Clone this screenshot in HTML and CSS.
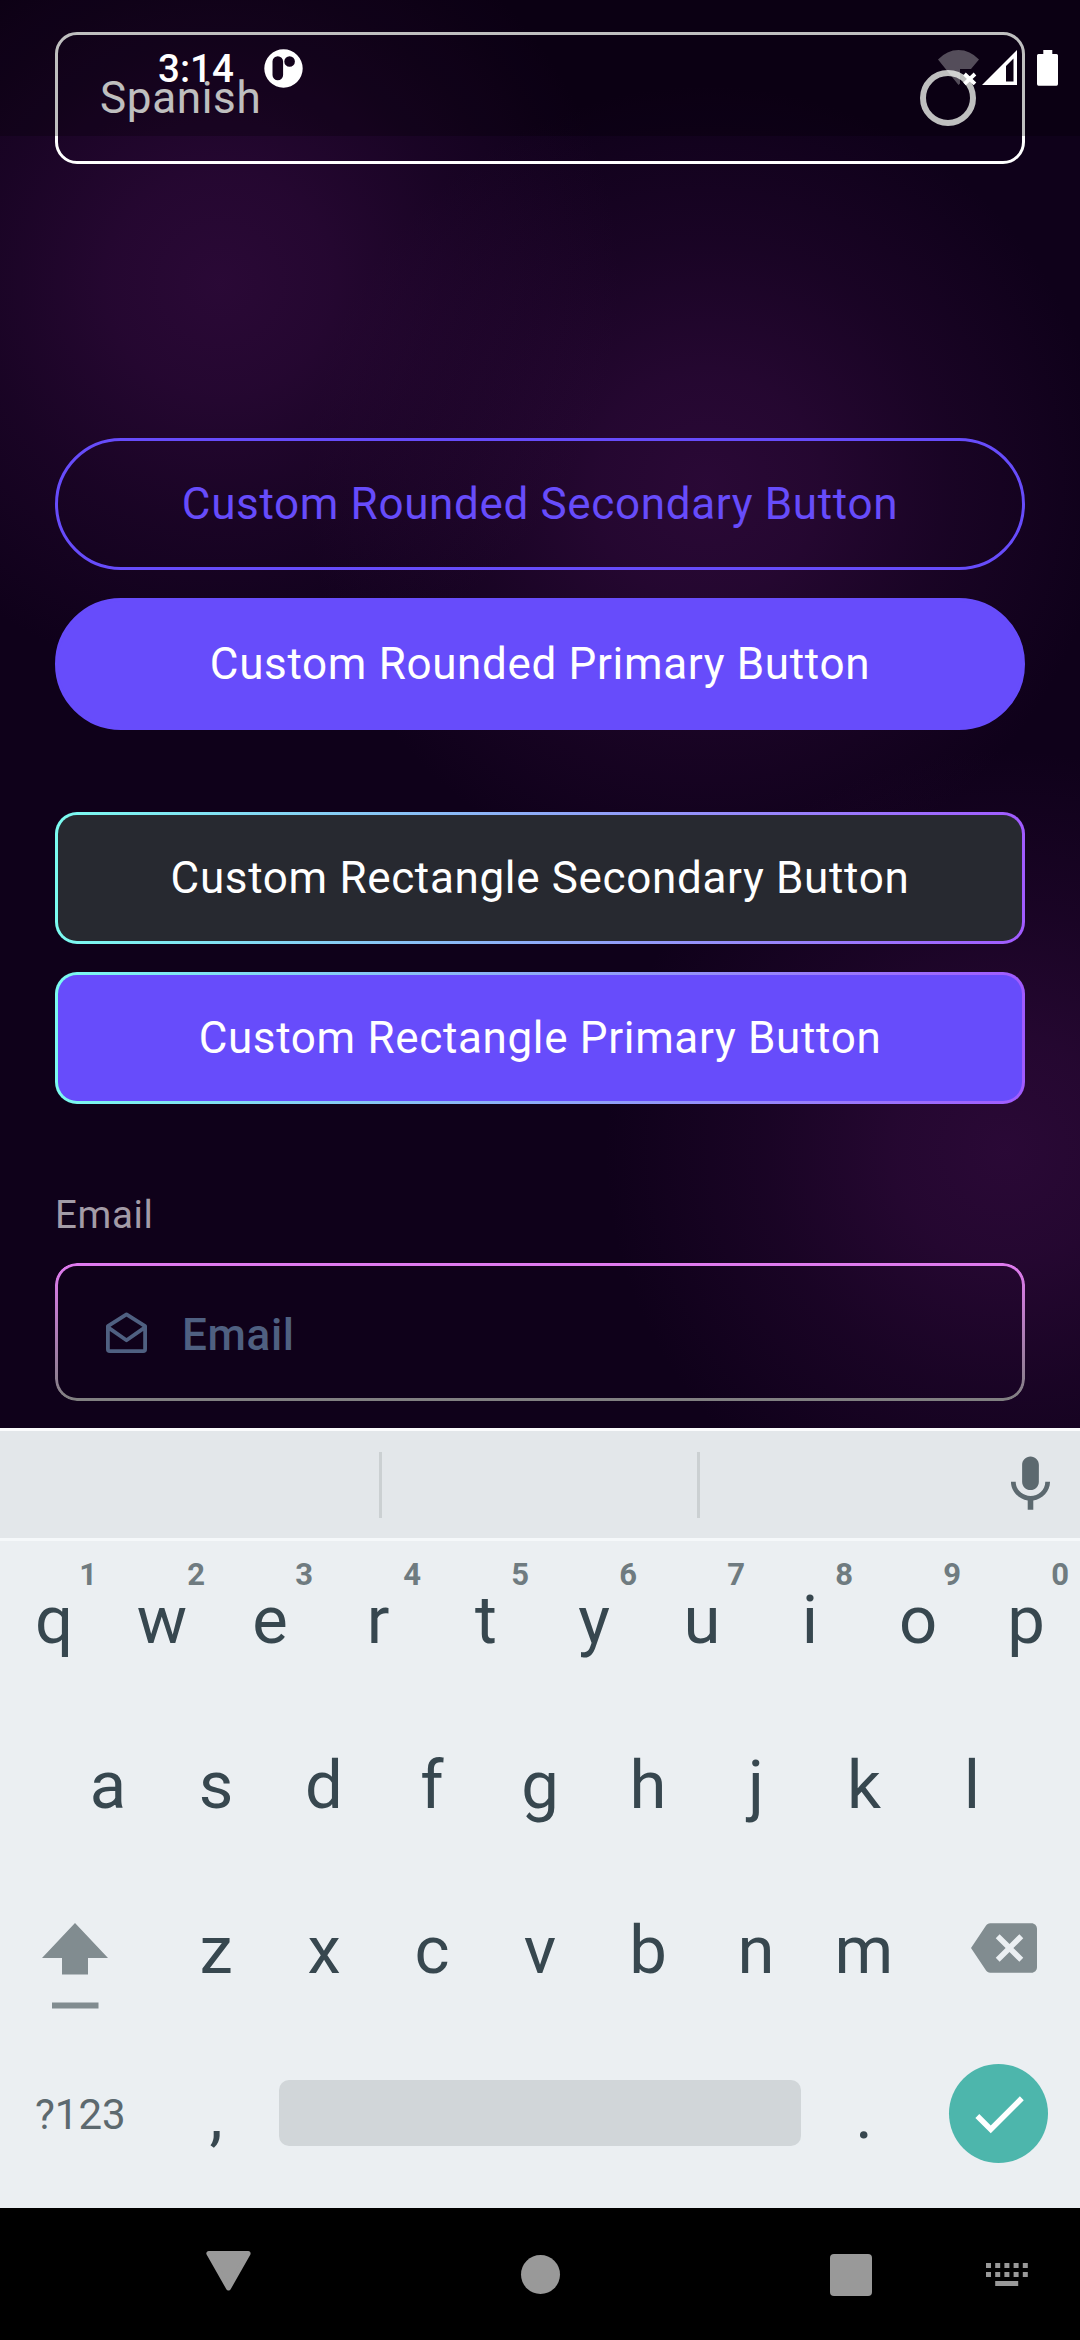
FILE: index.html
```html
<!DOCTYPE html>
<html lang="en">
<head>
<meta charset="utf-8">
<title>Custom components</title>
<link rel="stylesheet" href="styles.css">
</head>
<body>
<div class="screen">
  <main class="app">
    <div class="option">
      <span>Spanish</span>
      <span class="radio"></span>
    </div>
    <div class="button rounded outline">Custom Rounded Secondary Button</div>
    <div class="button rounded filled">Custom Rounded Primary Button</div>
    <div class="button rect dark">Custom Rectangle Secondary Button</div>
    <div class="button rect violet">Custom Rectangle Primary Button</div>
    <div class="label">Email</div>
    <div class="field">
      <svg class="mail" viewBox="0 0 41 41" fill="none" stroke="#4f6081" stroke-width="3.8" stroke-linejoin="round"><path d="M1.9 14.2 20.5 2.4 39.1 14.2V37.2Q39.1 39.1 37.2 39.1H3.8Q1.9 39.1 1.9 37.2ZM2.4 15.6 20.5 28.2 38.6 15.6"/></svg>
      <span class="placeholder">Email</span>
    </div>
  </main>

  <section class="keyboard">
    <div class="suggestions">
      <span class="slot"></span><span class="slot"></span>
      <svg class="mic" viewBox="0 0 24 24" fill="#5c696f"><path d="M12 14c1.66 0 2.99-1.34 2.99-3L15 5c0-1.66-1.34-3-3-3S9 3.34 9 5v6c0 1.66 1.34 3 3 3zm5.3-3c0 3-2.54 5.1-5.3 5.1S6.7 14 6.7 11H5c0 3.41 2.72 6.23 6 6.72V21h2v-3.28c3.28-.48 6-3.3 6-6.72h-1.7z"/></svg>
    </div>
    <div class="row">
      <span class="key">q<sup>1</sup></span><span class="key">w<sup>2</sup></span><span class="key">e<sup>3</sup></span><span class="key">r<sup>4</sup></span><span class="key">t<sup>5</sup></span><span class="key">y<sup>6</sup></span><span class="key">u<sup>7</sup></span><span class="key">i<sup>8</sup></span><span class="key">o<sup>9</sup></span><span class="key">p<sup>0</sup></span>
    </div>
    <div class="row">
      <span class="key">a</span><span class="key">s</span><span class="key">d</span><span class="key">f</span><span class="key">g</span><span class="key">h</span><span class="key">j</span><span class="key">k</span><span class="key">l</span>
    </div>
    <div class="row">
      <span class="side shift"><svg viewBox="0 0 66 86" fill="#818c90"><path d="M33 0 66 35H46V51.5H20V35H0ZM10 79.5H56.5V85.5H10Z"/></svg></span>
      <span class="key">z</span><span class="key">x</span><span class="key">c</span><span class="key">v</span><span class="key">b</span><span class="key">n</span><span class="key">m</span>
      <span class="side delete"><svg viewBox="0 0 24 24" fill="#818c90"><path d="M22 3H7c-.69 0-1.23.35-1.59.88L0 12l5.41 8.11c.36.53.9.89 1.59.89h15c1.1 0 2-.9 2-2V5c0-1.1-.9-2-2-2zm-3 12.59L17.59 17 14 13.41 10.41 17 9 15.59 12.59 12 9 8.41 10.41 7 14 10.59 17.59 7 19 8.41 15.41 12 19 15.59z"/></svg></span>
    </div>
    <div class="row">
      <span class="side symbols">?123</span>
      <span class="key">,</span>
      <span class="space"></span>
      <span class="key">.</span>
      <span class="side enter"><span class="done"><svg viewBox="0 0 24 24" fill="#fff"><path d="M9 16.17 4.83 12l-1.42 1.41L9 19 21 7l-1.41-1.41z"/></svg></span></span>
    </div>
  </section>

  <nav class="navbar">
    <svg class="back" viewBox="0 0 45 40" fill="#999" stroke="#999" stroke-width="5" stroke-linejoin="round"><path d="M2.9 2.5H42.1L22.5 37Z"/></svg>
    <span class="home"></span>
    <span class="recent"></span>
    <svg class="switch" viewBox="0 0 42 23" fill="none" stroke="#999" stroke-width="5"><path stroke-dasharray="5 4.2" d="M0 2.5H42M0 11.5H42"/><path d="M9.2 20.5H32.2"/></svg>
  </nav>

  <header class="status">
    <span class="time">3:14</span>
    <svg class="notice" viewBox="0 0 39 39"><path fill="#fff" fill-rule="evenodd" d="M19.5 .3a19.2 19.2 0 1 1 0 38.4a19.2 19.2 0 1 1 0-38.4ZM8.5 12.6V26a5.3 5.3 0 0 0 10.6 0V12.6a5.3 5.3 0 0 0-10.6 0ZM25.6 7.2a5.3 5.3 0 1 0 0 10.6a5.3 5.3 0 1 0 0-10.6Z"/></svg>
    <svg class="wifi" viewBox="0 0 41 36"><path fill="#fff" fill-opacity=".3" d="M0 9.5Q9 0 20.5 0T41 9.5L33 19H22V33.5L20.5 35Z"/><path stroke="#fff" stroke-width="3.8" d="M26.5 24 37 33.8M37 24 26.5 33.8"/></svg>
    <svg class="signal" viewBox="0 0 35 35"><path fill="#fff" fill-rule="evenodd" d="M35 0V35H0ZM31.5 8.5 24 16V31.5H31.5Z"/></svg>
    <svg class="battery" viewBox="0 0 21 36" fill="#fff"><path d="M6.3 0h9v4H19.500Q21 4 21 5.500V34Q21 35.700 19.500 35.700H1.500Q0 35.700 0 34V5.500Q0 4 1.500 4H6.300Z"/></svg>
  </header>
</div>
</body>
</html>
```
FILE: styles.css
```css
* { box-sizing: border-box; }

body {
  margin: 0;
  font-family: Roboto, "Liberation Sans", sans-serif;
}

svg { display: block; }

.screen {
  position: relative;
  display: flex;
  flex-direction: column;
  width: 1080px;
  height: 2340px;
  overflow: hidden;
}

/* App content */
.app {
  --glow: rgba(71, 17, 84, .48), rgba(71, 17, 84, .39) 110px, rgba(71, 17, 84, .19) 240px, rgba(71, 17, 84, 0) 400px;
  height: 1428px;
  padding: 32px 55px 0;
  overflow: hidden;
  background:
    radial-gradient(circle at 220px 283px, var(--glow)),
    radial-gradient(circle at 706px 485px, var(--glow)),
    radial-gradient(circle at 1005px 1150px, var(--glow)),
    #0f011a;
  color: #fff;
  font-size: 44px;
  letter-spacing: .66px;
}

.option {
  display: flex;
  align-items: center;
  justify-content: space-between;
  height: 132px;
  margin-bottom: 274px;
  padding: 0 46px 0 42px;
  border: 3px solid #fff;
  border-radius: 22px;
}

.radio {
  width: 56px;
  height: 56px;
  border: 6px solid #fff;
  border-radius: 50%;
}

.button {
  display: flex;
  align-items: center;
  justify-content: center;
  height: 132px;
  border: 3px solid transparent;
}

.rounded { border-radius: 66px; }
.outline { border-color: #674cfb; color: #674cfb; margin-bottom: 28px; }
.filled { background: #674cfb; border-color: #674cfb; margin-bottom: 82px; }

.rect {
  border-radius: 22px;
  background:
    linear-gradient(var(--fill), var(--fill)) padding-box,
    linear-gradient(90deg, #7bfbf0, #a15bff) border-box;
}

.dark { --fill: #272930; margin-bottom: 28px; }
.violet { --fill: #674cfb; margin-bottom: 88px; }

.label {
  height: 46px;
  margin-bottom: 25px;
  line-height: 46px;
  font-size: 38.5px;
  color: #a39ba7;
}

.field {
  position: relative;
  display: flex;
  align-items: center;
  gap: 35px;
  height: 138px;
  padding-left: 51px;
  font-weight: 500;
  color: #4f6081;
}

.field::before {
  content: "";
  position: absolute;
  inset: 0;
  padding: 3px;
  border-radius: 22px;
  background: linear-gradient(#e07af0, #808080);
  mask: linear-gradient(#000, #000) content-box exclude, linear-gradient(#000, #000);
}

.mail { width: 41px; height: 41px; }
.placeholder { padding-top: 5px; }

/* Keyboard */
.keyboard {
  height: 780px;
  background: #ebeff2;
  color: #37474f;
}

.suggestions {
  display: flex;
  align-items: center;
  height: 113px;
  border-top: 3px solid #fbfcfd;
  border-bottom: 3px solid #f5f8fa;
  background: #e3e7ea;
}

.slot {
  height: 66px;
  width: 318px;
  border-right: 3px solid #cbd0d2;
}

.slot:first-child { width: 382px; }
.mic { width: 67px; height: 67px; margin-left: 297px; }

.row {
  display: flex;
  justify-content: center;
  height: 165px;
}

.key {
  position: relative;
  width: 108px;
  padding-top: 40px;
  text-align: center;
  font-size: 67px;
  line-height: 78px;
}

.key sup {
  position: absolute;
  top: 15px;
  right: 11px;
  font-size: 31px;
  line-height: 38px;
  font-weight: 700;
  color: #6f7b80;
}

.side { width: 162px; }
.shift { padding: 52px 0 0 42px; }
.shift svg { width: 66px; height: 86px; }
.delete { padding: 44px 0 0 53px; }
.delete svg { width: 66px; height: 66px; }

.symbols {
  padding: 54px 0 0 35px;
  font-size: 42px;
  line-height: 50px;
  color: #5c696f;
}

.space {
  width: 522px;
  height: 66px;
  margin: 44px 9px 0;
  border-radius: 10px;
  background: #d1d6d9;
}

.enter { padding: 28px 0 0 31px; }

.done {
  display: flex;
  align-items: center;
  justify-content: center;
  width: 99px;
  height: 99px;
  border-radius: 50%;
  background: #4db6ac;
}

.done svg { width: 66px; height: 66px; }

/* Navigation bar */
.navbar {
  display: flex;
  align-items: flex-start;
  height: 132px;
  padding: 43px 0 0 206px;
  background: #000;
}

.back { width: 45px; height: 40px; }
.home { width: 39px; height: 39px; margin: 4px 0 0 270px; border-radius: 50%; background: #999; }
.recent { width: 42px; height: 42px; margin: 3px 0 0 270px; border-radius: 4px; background: #999; }
.switch { width: 42px; height: 23px; margin: 12px 0 0 114px; }

/* Translucent status bar over the app */
.status {
  position: absolute;
  inset: 0 0 auto;
  display: flex;
  align-items: flex-start;
  height: 136px;
  padding-left: 158px;
  background: rgba(0, 0, 0, .25);
  color: #fff;
}

.time { width: 106px; margin-top: 46px; font-size: 38.5px; line-height: 46px; font-weight: 500; }
.notice { width: 39px; height: 39px; margin-top: 49px; }
.wifi { width: 41px; height: 36px; margin: 50px 3px 0 635px; }
.signal { width: 35px; height: 35px; margin-top: 50px; }
.battery { width: 21px; height: 36px; margin: 50px 0 0 20px; }
```
